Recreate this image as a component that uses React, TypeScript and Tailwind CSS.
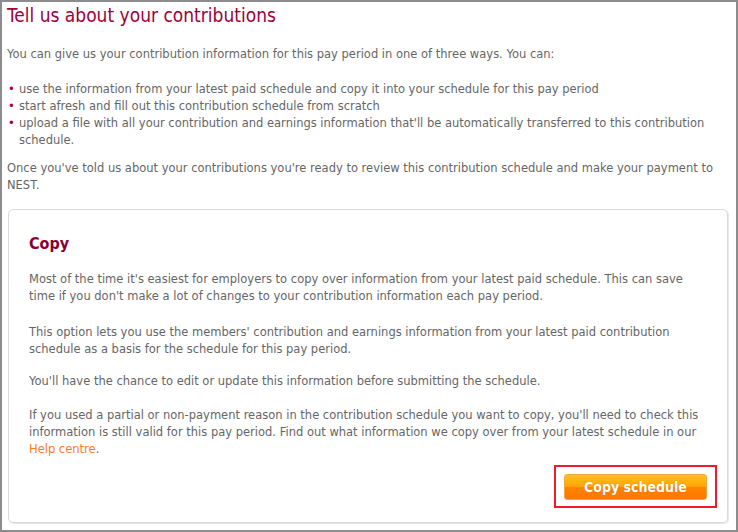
import React from "react";

const bullets = [
  "use the information from your latest paid schedule and copy it into your schedule for this pay period",
  "start afresh and fill out this contribution schedule from scratch",
];

const condensed = { fontFamily: '"DejaVu Sans Condensed", "DejaVu Sans", sans-serif' };

export default function App() {
  return (
    <div
      className="w-[738px] h-[532px] border-2 border-[#8c8c8c] bg-white text-[#666] text-[11.5px] leading-[17px] overflow-hidden"
      style={{ fontFamily: '"DejaVu Sans", sans-serif' }}
    >
      <div className="pl-[5px] pr-[6px]">
        <h1 className="text-[19px] leading-[26px] text-[#a0003a]" style={condensed}>
          Tell us about your contributions
        </h1>

        <p className="mt-[18px]">
          You can give us your contribution information for this pay period in one of three ways. You can:
        </p>

        {/* three ways */}
        <ul className="mt-[18px]">
          {bullets.map((b, i) => (
            <li key={i} className="flex">
              <span className="w-[12px] shrink-0 text-[#a0003a] pl-[1px]">•</span>
              <span>{b}</span>
            </li>
          ))}
          <li className="flex">
            <span className="w-[12px] shrink-0 text-[#a0003a] pl-[1px]">•</span>
            <span>
              upload a file with all your contribution and earnings information that'll be automatically transferred to this contribution
              <br />
              schedule.
            </span>
          </li>
        </ul>

        <p className="mt-[11px]">
          Once you've told us about your contributions you're ready to review this contribution schedule and make your payment to
          <br />
          NEST.
        </p>
      </div>

      {/* copy panel */}
      <div className="ml-[6px] mr-[8px] mt-[15px] h-[314px] rounded-[5px] border border-[#d9d9d9] shadow-[1px_1px_0_#e6e6e6] pl-[20px] pr-[10px] pt-[23px] flex flex-col">
        <h2 className="text-[16px] leading-[22px] font-bold text-[#8a0030]" style={condensed}>
          Copy
        </h2>

        <p className="mt-[16px]">
          Most of the time it's easiest for employers to copy over information from your latest paid schedule. This can save
          <br />
          time if you don't make a lot of changes to your contribution information each pay period.
        </p>
        <p className="mt-[19px]">
          This option lets you use the members' contribution and earnings information from your latest paid contribution
          <br />
          schedule as a basis for the schedule for this pay period.
        </p>
        <p className="mt-[15px]">You'll have the chance to edit or update this information before submitting the schedule.</p>
        <p className="mt-[17px]">
          If you used a partial or non-payment reason in the contribution schedule you want to copy, you'll need to check this
          <br />
          information is still valid for this pay period. Find out what information we copy over from your latest schedule in our
          <br />
          <a className="text-[#ff7a1e]">Help centre</a>.
        </p>

        <div className="mt-[7px] flex justify-end">
          <div className="border-2 border-[#ec1c2a] pt-[7px] pb-[6px] px-[8px]">
            <button
              className="w-[143px] h-[26px] rounded-[3px] border border-[#f5a93a] bg-[linear-gradient(to_bottom,#ffc21f_0%,#ffa400_50%,#ff8400_50%,#ff7600_100%)] text-white font-bold text-[14px] leading-[24px] [text-shadow:0_0_1px_rgba(160,70,0,0.5)]"
              style={condensed}
            >
              Copy schedule
            </button>
          </div>
        </div>
      </div>
    </div>
  );
}
